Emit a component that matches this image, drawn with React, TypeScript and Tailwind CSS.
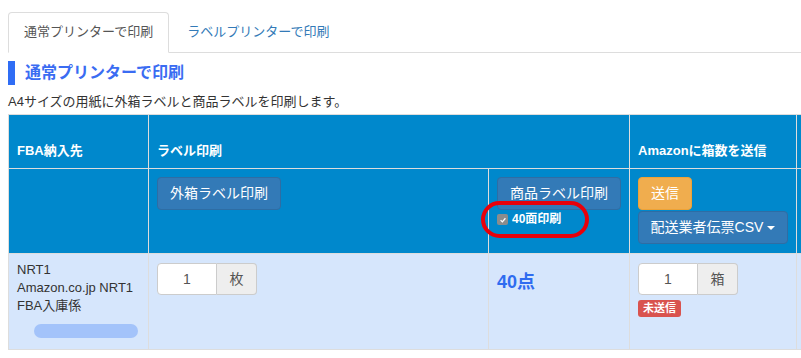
import React from 'react';

const FONT = '"Liberation Sans", "Noto Sans CJK JP", sans-serif';

const Caret = () => (
  <span className="ml-1 inline-block h-0 w-0 border-x-[4px] border-t-[4px] border-x-transparent border-t-white align-middle" />
);

const InputGroup = ({ unit }: { unit: string }) => (
  <div className="flex h-[32px] w-[100px]">
    <input
      readOnly
      value="1"
      className="w-[60px] rounded-l-[4px] border border-[#ccc] bg-white text-center text-[14px] text-[#555] outline-none"
    />
    <span className="flex w-[40px] items-center justify-center rounded-r-[4px] border border-l-0 border-[#ccc] bg-[#eee] text-[14px] text-[#555]">
      {unit}
    </span>
  </div>
);

const App = () => {
  return (
    <div className="h-[358px] w-[801px] overflow-hidden bg-white pl-2 pt-3 text-[#333]" style={{ fontFamily: FONT }}>
      {/* tabs */}
      <div className="flex border-b border-[#ddd] text-[13px]">
        <div className="-mb-px rounded-t-[4px] border border-[#ddd] border-b-white bg-white px-[15px] py-[9px] leading-5 text-[#555]">
          通常プリンターで印刷
        </div>
        <div className="ml-[2px] border border-transparent px-[15px] py-[9px] leading-5 text-[#337ab7]">
          ラベルプリンターで印刷
        </div>
      </div>

      {/* heading */}
      <div className="mt-[8px] flex h-[24px] items-center gap-[10px]">
        <span className="h-full w-[7px] bg-[#2f6df5]" />
        <h2 className="text-[16px] font-bold text-[#3a6cf2]">通常プリンターで印刷</h2>
      </div>
      <p className="mt-2 text-[13px] leading-[18px] text-[#333]">A4サイズの用紙に外箱ラベルと商品ラベルを印刷します。</p>

      {/* table */}
      <table className="mt-[3px] w-[888px] table-fixed border-collapse text-[13px]">
        <colgroup>
          <col className="w-[140px]" />
          <col className="w-[340px]" />
          <col className="w-[141px]" />
          <col className="w-[167px]" />
          <col className="w-[100px]" />
        </colgroup>
        <thead>
          <tr className="h-[54px] bg-[#0088cc] text-left text-white">
            <th className="border border-[#ddd] px-2 pb-2 align-bottom font-bold">FBA納入先</th>
            <th colSpan={2} className="border border-[#ddd] px-2 pb-2 align-bottom font-bold">ラベル印刷</th>
            <th className="border border-[#ddd] px-2 pb-2 align-bottom font-bold">Amazonに箱数を送信</th>
            <th className="border border-[#ddd] px-2 pb-2 align-bottom font-bold" />
          </tr>
          <tr className="h-[85px] bg-[#0088cc] text-left text-white">
            <th className="border border-[#ddd] px-2 pt-2 align-top" />
            <th className="border border-[#ddd] px-2 pt-2 align-top font-normal">
              <button className="h-[33px] rounded-[4px] border border-[#2e6da4] bg-[#337ab7] px-3 text-[14px] text-white">
                外箱ラベル印刷
              </button>
            </th>
            <th className="border border-[#ddd] px-2 pt-2 align-top font-normal">
              <button className="h-[33px] rounded-[4px] border border-[#2e6da4] bg-[#337ab7] px-3 text-[14px] text-white">
                商品ラベル印刷
              </button>
              <div className="relative mt-[1px] flex items-center gap-[4px] leading-[17px]">
                <span className="flex h-[11px] w-[11px] items-center justify-center rounded-[2px] bg-[#8c8c8c]">
                  <svg viewBox="0 0 10 10" className="h-[8px] w-[8px]">
                    <path d="M2 5.2 L4.2 7.4 L8 2.8" fill="none" stroke="white" strokeWidth="1.6" />
                  </svg>
                </span>
                <span className="text-[12px] font-bold text-white">40面印刷</span>
                <span className="absolute left-[-16px] top-[-10px] h-[37px] w-[108px] rounded-full border-[4px] border-[#e8000a]" />
              </div>
            </th>
            <th className="border border-[#ddd] px-2 pt-2 align-top font-normal">
              <div className="flex flex-col items-start gap-[1px]">
                <button className="h-[33px] rounded-[4px] border border-[#eea236] bg-[#f0ad4e] px-3 text-[14px] text-white">
                  送信
                </button>
                <button className="flex h-[33px] w-[150px] items-center justify-center rounded-[4px] border border-[#2e6da4] bg-[#337ab7] text-[14px] text-white">
                  配送業者伝票CSV
                  <Caret />
                </button>
              </div>
            </th>
            <th className="border border-[#ddd]" />
          </tr>
        </thead>
        <tbody>
          <tr className="h-[96px] bg-[#d6e6fc]">
            <td className="border border-[#ddd] px-2 pt-[7px] align-top leading-[18px]">
              <div>NRT1</div>
              <div>Amazon.co.jp NRT1</div>
              <div>FBA入庫係</div>
              <div className="ml-[17px] mt-[9px] h-[14px] w-[104px] rounded-full bg-[#a3c3fa]" />
            </td>
            <td className="border border-[#ddd] px-2 pt-[9px] align-top">
              <InputGroup unit="枚" />
            </td>
            <td className="border border-[#ddd] px-2 pt-[15px] align-top">
              <span className="text-[18px] font-bold text-[#2f6cf0]">40点</span>
            </td>
            <td className="border border-[#ddd] px-2 pt-[9px] align-top">
              <InputGroup unit="箱" />
              <span className="mt-[5px] inline-block rounded-[3px] bg-[#d9534f] px-[5px] text-[11px] font-bold leading-[17px] text-white">
                未送信
              </span>
            </td>
            <td className="border border-[#ddd]" />
          </tr>
        </tbody>
      </table>
    </div>
  );
};

export default App;
